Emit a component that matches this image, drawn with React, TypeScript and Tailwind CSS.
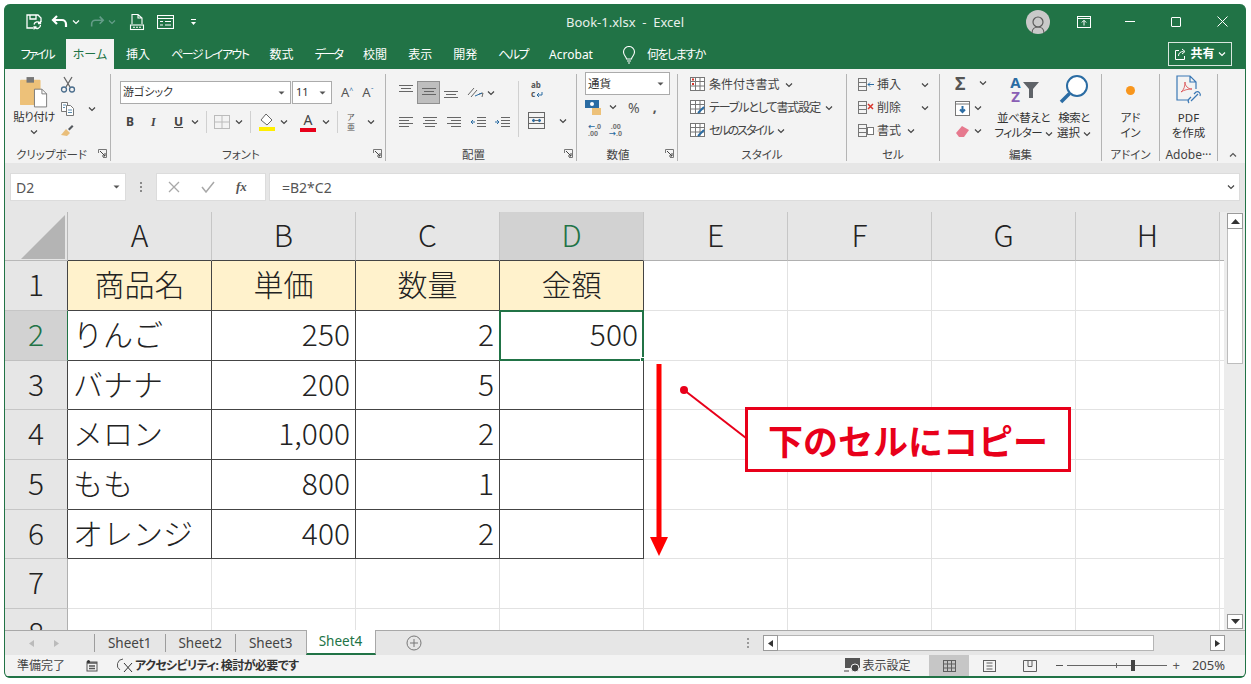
import type { ReactNode } from "react";

const grayIcon = "#5f5f5f";

function Chev({ color = "#444", className = "" }: { color?: string; className?: string }) {
  return (
    <svg width="8" height="6" viewBox="0 0 8 6" className={className}>
      <path d="M1 1.500l3 3 3-3" fill="none" stroke={color} strokeWidth="1.200" />
    </svg>
  );
}

function Drop({ color = "#555" }: { color?: string }) {
  return (
    <svg width="7" height="4" viewBox="0 0 7 4">
      <path d="M0.500 0.500h6L3.500 3.500z" fill={color} />
    </svg>
  );
}

function Launcher() {
  return (
    <svg width="9" height="9" viewBox="0 0 9 9" className="absolute right-[3px] bottom-[3px]">
      <path d="M.5 4V.5H8.500V8.500H5" fill="none" stroke="#777" />
      <path d="M2 2l5 5M7 4v3H4" fill="none" stroke="#444" />
    </svg>
  );
}

function Group({ w, label, launcher, children }: { w: string; label: ReactNode; launcher?: boolean; children: ReactNode }) {
  return (
    <div className={`${w} relative flex h-[87px] shrink-0 flex-col border-r border-[#b4b4b4]`}>
      <div className="min-h-0 flex-1">{children}</div>
      <div className="h-[14px] text-center text-[11.500px] leading-[15px] text-[#444]">{label}</div>
      {launcher && <Launcher />}
    </div>
  );
}

function AlignLines({ lines, className = "" }: { lines: [number, number][]; className?: string }) {
  return (
    <svg width="16" height="12" viewBox="0 0 16 12" className={className}>
      {lines.map(([a, b], i) => (
        <path key={i} d={`M${a} ${1.5 + i * 3}H${b}`} stroke="#666" strokeWidth="1" />
      ))}
    </svg>
  );
}

function QuickBar() {
  return (
    <div className="flex items-center gap-[8px] pl-[20px] text-white">
      <svg width="18" height="18" viewBox="0 0 18 18" fill="none" stroke="#fff" strokeWidth="1.300">
        <path d="M8 15H2V2h11l3 3v4M5 2v4h6V2" />
        <path d="M15.500 12a3.500 3.500 0 0 1-6.200 2.200M9 11.500a3.500 3.500 0 0 1 6-1.500M15.500 8v2.500h-2.500M9 16.500v-2.500h2.500" />
      </svg>
      <div className="flex items-center gap-[3px]">
        <svg width="18" height="14" viewBox="0 0 18 14" fill="none" stroke="#fff" strokeWidth="2.200">
          <path d="M6 1L2 5l4 4M2 5h9a4 4 0 0 1 4 4v3" />
        </svg>
        <Chev color="#fff" />
      </div>
      <div className="ml-[1px] flex items-center gap-[3px] opacity-40">
        <svg width="16" height="14" viewBox="0 0 18 14" fill="none" stroke="#cde" strokeWidth="1.800">
          <path d="M12 1l4 4-4 4M16 5H7a4 4 0 0 0-4 4v3" />
        </svg>
        <Chev color="#cde" />
      </div>
      <svg width="16" height="18" viewBox="0 0 16 18" fill="none" stroke="#fff" strokeWidth="1.100" className="ml-[5px]">
        <path d="M3 11V1.500h6L13 5v6M9 1.500V5h4" />
        <rect x="1.500" y="12" width="13" height="4.500" />
        <path d="M4 14.200h2M7 14.200h2M10 14.200h2" />
      </svg>
      <svg width="17" height="14" viewBox="0 0 17 14" fill="none" stroke="#fff" strokeWidth="1.100" className="ml-[4px]">
        <rect x=".5" y=".5" width="16" height="13" />
        <path d="M.5 3.500h16M3 6.500h3M8 6.500h6M3 10h3M8 10h6" />
      </svg>
      <svg width="7" height="8" viewBox="0 0 7 8" className="ml-[8px]">
        <path d="M1 1.500h5" stroke="#fff" />
        <path d="M1 4h5L3.500 7z" fill="#fff" />
      </svg>
    </div>
  );
}

function WindowButtons() {
  return (
    <div className="flex items-center justify-end">
      <div className="flex h-[24px] w-[24px] items-end justify-center rounded-full bg-[#c9c9c9]">
        <svg width="18" height="20" viewBox="0 0 18 20" fill="none" stroke="#5a5a5a" strokeWidth="1.200">
          <circle cx="9" cy="8" r="5" />
          <path d="M3 19c0-4 3-6 6-6s6 2 6 6" />
        </svg>
      </div>
      <svg width="14" height="12" viewBox="0 0 14 12" fill="none" stroke="#fff" className="ml-[27px]">
        <rect x=".5" y=".5" width="13" height="11" />
        <path d="M.5 2.500h13M7 9.500V4.500M4.800 6.500L7 4.300l2.200 2.200" />
      </svg>
      <div className="ml-[34px] h-px w-[10px] bg-white" />
      <div className="ml-[36px] h-[10px] w-[10px] rounded-[1px] border border-white" />
      <svg width="11" height="11" viewBox="0 0 11 11" stroke="#fff" className="mr-[17px] ml-[36px]">
        <path d="M.5.5l10 10M10.500.5l-10 10" />
      </svg>
    </div>
  );
}

function MenuTabs() {
  const tabs = [
    { t: "挿入", c: "" },
    { t: "ページ レイアウト", c: "tracking-[-1.500px]" },
    { t: "数式", c: "" },
    { t: "データ", c: "tracking-[-2px]" },
    { t: "校閲", c: "" },
    { t: "表示", c: "" },
    { t: "開発", c: "" },
    { t: "ヘルプ", c: "tracking-[-1.500px]" },
    { t: "Acrobat", c: "" },
  ];
  return (
    <div className="flex h-[30px] items-end text-[12px] text-white">
      <div className="flex h-[30px] w-[61px] items-center justify-center pt-[2px] pl-[3px] tracking-[-2.200px]">ファイル</div>
      <div className="flex h-[30px] w-[48px] items-center justify-center bg-[#f3f3f3] pt-[2px] text-[#217346]">ホーム</div>
      <div className="ml-[12px] flex h-[30px] items-center gap-[21px] pt-[2px]">
        {tabs.map(({ t, c }) => (
          <span key={t} className={c}>
            {t}
          </span>
        ))}
      </div>
      <div className="ml-[29px] flex h-[30px] items-center gap-[11px] pt-[2px]">
        <svg width="14" height="18" viewBox="0 0 14 18" fill="none" stroke="#fff" strokeWidth="1.100">
          <path d="M4.500 13c0-2-3-3.500-3-7a5.500 5.500 0 0 1 11 0c0 3.500-3 5-3 7zM5 15h4M6 17h2" />
        </svg>
        <span className="tracking-[-1.500px]">何をしますか</span>
      </div>
      <div className="mr-[13px] mb-[3px] ml-auto flex h-[24px] w-[64px] items-center justify-center gap-[3px] border border-[#d9e6de]">
        <svg width="13" height="13" viewBox="0 0 13 13" fill="none" stroke="#fff">
          <path d="M5 2.500H1.500v9h9V8M4.500 8c0-3 2-4.500 5-4.500M8 1l3 2.500L8 6" />
        </svg>
        <span className="font-bold">共有</span>
        <Chev color="#fff" />
      </div>
    </div>
  );
}

function ClipboardGroup() {
  return (
    <div className="flex pt-[2px]">
      <div className="flex w-[52px] flex-col items-center pl-[6px]">
        <svg width="28" height="32" viewBox="0 0 30 34">
          <rect x="0" y="4" width="22" height="27" rx="1" fill="#edc179" />
          <rect x="7" y="1" width="8" height="6" fill="#777" />
          <path d="M15.500 14h8l5 5v14h-13z" fill="#fff" stroke="#777" />
          <path d="M23.500 14v5h5" fill="none" stroke="#777" />
        </svg>
        <span className="mt-[1px] text-[11.500px] leading-[15px] tracking-[-0.600px] whitespace-nowrap">貼り付け</span>
        <Chev className="mt-[5px]" />
      </div>
      <div className="ml-[3px] flex flex-col gap-[8px]">
        <svg width="16" height="17" viewBox="0 0 16 17" fill="none" stroke="#4a6d8c" strokeWidth="1.300">
          <path d="M4 1l6 10M12 1L6 11" stroke="#666" />
          <circle cx="4" cy="13.500" r="2.500" />
          <circle cx="12" cy="13.500" r="2.500" />
        </svg>
        <div className="flex items-center">
          <svg width="15" height="15" viewBox="0 0 15 15" fill="#fff" stroke="#777">
            <path d="M1.500 1.500h6v9h-6z" />
            <path d="M6.500 4.500h4l3 3v7h-7z" />
            <path d="M3 4h3M3 6.500h2M8 9h4M8 11.500h4" stroke="#5b8db0" />
          </svg>
          <Chev className="ml-[13px]" />
        </div>
        <svg width="14" height="13" viewBox="0 0 14 13">
          <path d="M1 11l5-6 4 4-3 3z" fill="#e9be7a" />
          <path d="M8 5l4-4 1.500 1.500-4 4z" fill="#55595e" />
        </svg>
      </div>
    </div>
  );
}

function FontGroup() {
  return (
    <div className="pt-[7px] pl-[9px]">
      <div className="flex items-center">
        <div className="flex h-[23px] w-[171px] items-center justify-between border border-[#ababab] bg-white pr-[5px] pl-[2px] text-[11px]">
          <span>游ゴシック</span>
          <Drop />
        </div>
        <div className="ml-[1px] flex h-[23px] w-[40px] items-center justify-between border border-[#ababab] bg-white pr-[5px] pl-[3px] text-[11px]">
          <span>11</span>
          <Drop />
        </div>
        <span className="ml-[9px] text-[13px] text-[#555]">A<sup className="text-[7px] text-[#2b6ca3]">^</sup></span>
        <span className="ml-[9px] text-[13px] text-[#555]">A<sup className="text-[7px] text-[#2b6ca3]">ˇ</sup></span>
      </div>
      <div className="mt-[6px] flex h-[24px] items-center pl-[6px] text-[12px] text-[#444]">
        <b className="w-[25px]">B</b>
        <i className="w-[23px] font-['Liberation_Serif',serif] font-bold">I</i>
        <u className="w-[17px] font-bold">U</u>
        <Chev />
        <div className="mx-[7px] h-[22px] w-px bg-[#d0d0d0]" />
        <svg width="16" height="14" viewBox="0 0 16 14" fill="none" stroke="#bbb" className="mr-[5px]">
          <rect x=".5" y=".5" width="15" height="13" />
          <path d="M8 .5v13M.5 7h15" />
        </svg>
        <Chev />
        <div className="mx-[7px] h-[22px] w-px bg-[#d0d0d0]" />
        <svg width="18" height="20" viewBox="0 0 18 20" className="mr-[4px]">
          <path d="M8 2l6 6-5 5-6-5z" fill="#fff" stroke="#666" />
          <rect x="1" y="15" width="16" height="4" fill="#ffee00" />
        </svg>
        <Chev />
        <div className="relative mr-[6px] ml-[12px] h-[20px] w-[16px] text-center text-[14px] leading-[16px] text-[#444]">
          A<div className="absolute right-0 bottom-0 left-0 h-[4px] bg-[#e8001a]" />
        </div>
        <Chev />
        <div className="mx-[7px] h-[22px] w-px bg-[#d0d0d0]" />
        <svg width="12" height="20" viewBox="0 0 12 20" fill="#555" fontSize="8" className="overflow-visible">
          <text x="2" y="8">ア</text>
          <text x="2" y="18">亜</text>
        </svg>
        <Chev className="ml-[10px]" />
      </div>
    </div>
  );
}

function AlignGroup() {
  return (
    <div className="flex pt-[7px] pl-[12px]">
      <div className="flex flex-col gap-[12px]">
        <div className="flex h-[23px] items-center gap-[3px]">
          <AlignLines lines={[[1, 15], [3, 13], [1, 15]]} className="-mt-[6px]" />
          <div className="flex h-[23px] w-[23px] items-center justify-center border border-[#8f8f8f] bg-[#bebebe]">
            <AlignLines lines={[[1, 15], [3, 13], [1, 15]]} />
          </div>
          <AlignLines lines={[[1, 15], [3, 13], [1, 15]]} className="mt-[6px]" />
          <svg width="18" height="14" viewBox="0 0 18 14" fill="none" stroke="#666" className="ml-[4px]">
            <path d="M2 9l6-7M5 11l6-7M13 8l4-1-1 4" />
            <path d="M9 10l7-3" stroke="#2b6ca3" />
          </svg>
          <Chev />
        </div>
        <div className="flex items-center gap-[8px]">
          <AlignLines lines={[[1, 15], [1, 11], [1, 15], [1, 11]]} />
          <AlignLines lines={[[1, 15], [3, 13], [1, 15], [3, 13]]} />
          <AlignLines lines={[[1, 15], [5, 15], [1, 15], [5, 15]]} />
          <svg width="16" height="12" viewBox="0 0 16 12" fill="none" stroke="#666">
            <path d="M7 1.500h9M7 4.500h9M7 7.500h9M7 10.500h9" />
            <path d="M5 6H1M3 4L1 6l2 2" stroke="#2b6ca3" />
          </svg>
          <svg width="16" height="12" viewBox="0 0 16 12" fill="none" stroke="#666">
            <path d="M7 1.500h9M7 4.500h9M7 7.500h9M7 10.500h9" />
            <path d="M1 6h4M3 4l2 2-2 2" stroke="#2b6ca3" />
          </svg>
        </div>
      </div>
      <div className="mx-[8px] h-[56px] w-px bg-[#d0d0d0]" />
      <div className="-mt-[1px] flex flex-col gap-[12px] pl-[1px]">
        <svg width="16" height="20" viewBox="0 0 16 20" fill="#555" fontSize="8" fontWeight="700" className="overflow-visible">
          <text x="3" y="8">ab</text>
          <text x="3" y="17">c</text>
          <path d="M14 12v3H9M11 13l-2 2 2 2" fill="none" stroke="#2b6ca3" />
        </svg>
        <div className="flex items-center gap-[14px]">
          <svg width="17" height="17" viewBox="0 0 17 17" fill="none" stroke="#666">
            <rect x=".5" y=".5" width="16" height="16" />
            <path d="M.5 5.500h16M.5 11.500h16M4 8.500h9" />
            <path d="M4 8.500l2-1.500v3zM13 8.500l-2-1.500v3z" fill="#2b6ca3" stroke="#2b6ca3" />
          </svg>
          <Chev />
        </div>
      </div>
    </div>
  );
}

function NumberGroup() {
  return (
    <div className="-mt-[2px] pl-[8px]">
      <div className="flex h-[23px] w-[85px] items-center justify-between border border-[#ababab] bg-white pr-[5px] pl-[2px] text-[11.500px]">
        <span>通貨</span>
        <Drop />
      </div>
      <div className="mt-[1px] flex h-[22px] items-center">
        <svg width="17" height="17" viewBox="0 0 17 17">
          <rect x="0" y="1" width="14" height="8" fill="#2b6ca3" />
          <circle cx="7" cy="5" r="2" fill="#fff" />
          <rect x="7" y="9" width="9" height="7" fill="#edc179" />
        </svg>
        <Chev className="ml-[7px]" />
        <span className="ml-[11px] text-[14px] text-[#555]">%</span>
        <span className="ml-[13px] text-[14px] leading-[10px] font-bold text-[#555]">,</span>
      </div>
      <div className="mt-[5px] flex gap-[8px] pl-[3px] text-[7px] leading-[7px] font-bold text-[#777]">
        <span>
          <span className="text-[#2b6ca3]">←</span>.0
          <br />
          .00
        </span>
        <span>
          &nbsp;.00
          <br />
          <span className="text-[#2b6ca3]">→</span>.0
        </span>
      </div>
    </div>
  );
}

function StyleRow({ accent, text, track }: { accent: ReactNode; text: string; track: string }) {
  return (
    <div className="flex h-[23px] items-center gap-[3px] text-[12px] text-[#444]">
      <svg width="16" height="15" viewBox="0 0 16 15" fill="none" stroke="#777">
        <rect x=".5" y=".5" width="14" height="13" fill="#fff" />
        <path d="M.5 4.500h14M.5 9h14M5.500.5v13M10 .5v13" />
        {accent}
      </svg>
      <span className={`${track} whitespace-nowrap`}>{text}</span>
      <Chev className="ml-[2px]" />
    </div>
  );
}

function CellRow({ text, accent, w }: { text: string; accent: ReactNode; w: string }) {
  return (
    <div className="flex h-[23px] items-center text-[12px] text-[#444]">
      <svg width="16" height="14" viewBox="0 0 16 14" fill="none" stroke="#777">
        <rect x=".5" y=".5" width="8" height="4" />
        <rect x=".5" y="4.500" width="8" height="4" />
        <rect x=".5" y="8.500" width="8" height="4" />
        {accent}
      </svg>
      <span className={`${w} ml-[3px]`}>{text}</span>
      <Chev />
    </div>
  );
}

function EditGroup() {
  return (
    <div className="flex pl-[15px]">
      <div className="flex w-[38px] flex-col gap-[7px]">
        <div className="flex h-[18px] items-center">
          <span className="w-[24px] text-[18px] leading-[18px] font-bold text-[#555]">Σ</span>
          <Chev />
        </div>
        <div className="flex h-[18px] items-center">
          <svg width="15" height="15" viewBox="0 0 15 15" className="mr-[4px]">
            <rect x=".5" y=".5" width="14" height="14" fill="#fff" stroke="#777" />
            <path d="M.5 3h14" stroke="#777" />
            <path d="M7.500 5v6M5 8.500l2.500 2.500L10 8.500" fill="none" stroke="#2b6ca3" strokeWidth="2" />
          </svg>
          <Chev />
        </div>
        <div className="flex h-[14px] items-center">
          <svg width="15" height="13" viewBox="0 0 15 13" className="mr-[4px]">
            <path d="M1 8l6-7 7 4-5 7H4z" fill="#e6798e" />
          </svg>
          <Chev />
        </div>
      </div>
      <div className="flex w-[61px] flex-col items-center">
        <div className="flex h-[30px] items-center">
          <svg width="15" height="28" viewBox="0 0 15 28" fontSize="15" fontWeight="700" textAnchor="middle" className="overflow-visible">
            <text x="7.500" y="13" fill="#2b6ca3">A</text>
            <text x="7.500" y="27" fill="#8a5fb5">Z</text>
          </svg>
          <svg width="16" height="17" viewBox="0 0 16 17">
            <path d="M0 1h16l-6 7v9H6V8z" fill="#5f6368" />
          </svg>
        </div>
        <span className="mt-[6px] text-[11.500px] leading-[15px] tracking-[-0.500px] whitespace-nowrap">並べ替えと</span>
        <span className="text-[11.500px] leading-[15px] tracking-[-0.500px] whitespace-nowrap">
          フィルター <Chev className="inline" />
        </span>
      </div>
      <div className="flex w-[40px] flex-col items-center">
        <svg width="30" height="30" viewBox="0 0 30 30" fill="none">
          <circle cx="18" cy="12" r="10" stroke="#2b6ca3" strokeWidth="2" fill="#fff" />
          <path d="M10.500 19.500L2 28" stroke="#2b6ca3" strokeWidth="3.500" />
        </svg>
        <span className="mt-[6px] text-[11.500px] leading-[15px] tracking-[-0.500px] whitespace-nowrap">検索と</span>
        <span className="text-[11.500px] leading-[15px] whitespace-nowrap">
          選択 <Chev className="inline" />
        </span>
      </div>
    </div>
  );
}

function Ribbon() {
  return (
    <div className="flex h-[94px] items-start justify-start bg-[#f3f3f3] pt-[5px] text-[#333]">
      <Group w="w-[106px]" label={<span className="-ml-[12px] inline-block">クリップボード</span>} launcher>
        <ClipboardGroup />
      </Group>
      <Group w="w-[275px]" label={<span className="-ml-[14px] inline-block">フォント</span>} launcher>
        <FontGroup />
      </Group>
      <Group w="w-[191px]" label={<span className="-ml-[15px] inline-block">配置</span>} launcher>
        <AlignGroup />
      </Group>
      <Group w="w-[101px]" label={<span className="-ml-[18px] inline-block">数値</span>} launcher>
        <NumberGroup />
      </Group>
      <Group w="w-[169px]" label="スタイル">
        <div className="-mt-[1px] pl-[12px]">
          <StyleRow track="" text="条件付き書式" accent={<path d="M2 2.500h2M2 7h2" stroke="#d8352a" strokeWidth="2" />} />
          <StyleRow track="tracking-[-1.100px]" text="テーブルとして書式設定" accent={<path d="M8 13l6-6" stroke="#2b6ca3" strokeWidth="2" />} />
          <StyleRow track="tracking-[-2px]" text="セルのスタイル" accent={<path d="M8 13l6-6" stroke="#2b6ca3" strokeWidth="2" />} />
        </div>
      </Group>
      <Group w="w-[93px]" label="セル">
        <div className="-mt-[1px] pl-[11px]">
          <CellRow text="挿入" accent={<path d="M10 6.500h6M12 4.500l-2 2 2 2" stroke="#2b6ca3" />} w="w-[44px]" />
          <CellRow text="削除" accent={<path d="M10 3l5 5M15 3l-5 5" stroke="#d8352a" strokeWidth="1.500" />} w="w-[44px]" />
          <CellRow text="書式" accent={<rect x="9.500" y="3.500" width="6" height="7" fill="#fff" />} w="w-[30px]" />
        </div>
      </Group>
      <Group w="w-[162px]" label="編集">
        <EditGroup />
      </Group>
      <Group w="w-[58px]" label="アドイン">
        <div className="flex flex-col items-center pt-[12px]">
          <div className="h-[9px] w-[9px] rounded-full bg-[#f8961d]" />
          <span className="mt-[15px] text-center text-[11.500px] leading-[15px]">
            アド
            <br />
            イン
          </span>
        </div>
      </Group>
      <Group w="w-[58px]" label={<span className="text-[12px] whitespace-nowrap">Adobe···</span>}>
        <div className="flex flex-col items-center pt-[1px]">
          <svg width="27" height="31" viewBox="0 0 27 31" fill="none" stroke="#3a78b5" strokeWidth="1.200">
            <path d="M13 25H2V1h13l6 6v7M15 1v6h6" />
            <path d="M6 17c3-2 4-6 4-10 0 4 3 7 7 7-4 0-8 1-11 3z" stroke="#d8464a" strokeWidth=".8" />
            <path d="M16 26l7-7m-9 9a3 3 0 0 1 0-4l2-2m9-1a3 3 0 0 0-4-4l-2 2" />
          </svg>
          <span className="mt-[4px] text-center text-[11.500px] leading-[15px]">
            PDF
            <br />
            を作成
          </span>
        </div>
      </Group>
      <div className="relative h-[86px] flex-1">
        <Chev className="absolute right-[8px] bottom-[2px] rotate-180" color="#555" />
      </div>
    </div>
  );
}

function FormulaBar() {
  return (
    <div className="flex h-[49px] gap-0 bg-[#e6e6e6] pt-[10px] pl-[5px] text-[14px] text-[#555]">
      <div className="flex h-[28px] w-[116px] items-center justify-between border border-[#dcdcdc] bg-white pr-[5px] pl-[5px]">
        <span className="pt-[1px]">D2</span>
        <Drop />
      </div>
      <div className="flex w-[30px] items-center justify-center pb-[10px] text-[#999]">
        <svg width="3" height="11" viewBox="0 0 3 11" fill="#8a8a8a">
          <rect y="0" width="2" height="2" />
          <rect y="4" width="2" height="2" />
          <rect y="8" width="2" height="2" />
        </svg>
      </div>
      <div className="flex h-[28px] w-[110px] items-center gap-[21px] border border-[#dcdcdc] bg-white pl-[11px]">
        <svg width="12" height="12" viewBox="0 0 12 12" stroke="#a8a8a8" strokeWidth="1.300">
          <path d="M1 1l10 10M11 1L1 11" />
        </svg>
        <svg width="14" height="12" viewBox="0 0 14 12" fill="none" stroke="#a8a8a8" strokeWidth="1.500">
          <path d="M1 6l4 5 8-10" />
        </svg>
        <i className="font-['Liberation_Serif',serif] text-[13px] font-bold text-[#555]">fx</i>
      </div>
      <div className="ml-[3px] flex h-[28px] w-[971px] items-center justify-between border border-[#dcdcdc] bg-white pr-[4px] pl-[12px]">
        <span>=B2*C2</span>
        <Chev />
      </div>
    </div>
  );
}

const columns = ["A", "B", "C", "D", "E", "F", "G", "H"];
const rowHeights = ["h-[50px]", "h-[50px]", "h-[49px]", "h-[50px]", "h-[50px]", "h-[49px]", "h-[50px]", "h-[50px]"];
const table: string[][] = [
  ["商品名", "単価", "数量", "金額"],
  ["りんご", "250", "2", "500"],
  ["バナナ", "200", "5", ""],
  ["メロン", "1,000", "2", ""],
  ["もも", "800", "1", ""],
  ["オレンジ", "400", "2", ""],
];

function Sheet() {
  return (
    <div className="relative h-[369px] overflow-hidden bg-white">
      <div className="grid grid-cols-[63px_repeat(8,144px)_4px] font-['Noto_Sans_CJK_JP',sans-serif] text-[30px] leading-none font-light text-[#222] [font-feature-settings:normal]">
        {rowHeights.map((h, r) => {
          const row = table[r];
          const active = r === 1;
          return (
            <div key={r} className="contents">
              <div
                className={`${h} flex items-center justify-center border-b pb-[5px] ${
                  active ? "border-[#c0c0c0] bg-[#d2d2d2] text-[#217346]" : "border-[#c6c6c6] bg-[#e6e6e6]"
                } border-r ${active ? "border-r-[#217346]" : row ? "border-r-[#444]" : "border-r-[#b0b0b0]"}`}
              >
                {r + 1}
              </div>
              {columns.map((_, c) => {
                const v = row && c < 4 ? row[c] : undefined;
                const inTable = row && c < 4;
                const head = r === 0 && c < 4;
                const numeric = r > 0 && c > 0;
                return (
                  <div
                    key={c}
                    className={`${h} relative flex items-center border-r border-b px-[5px] pb-[5px] ${
                      inTable ? "border-[#444]" : "border-[#e2e2e2]"
                    } ${head ? "justify-center bg-[#fff2cc]" : numeric ? "justify-end" : "justify-start"}`}
                  >
                    {v}
                    {r === 1 && c === 3 && (
                      <div className="absolute -top-px -right-px -bottom-px -left-px border-2 border-[#217346]">
                        <div className="absolute -right-[3px] -bottom-[3px] h-[5px] w-[5px] border border-white bg-[#217346]" />
                      </div>
                    )}
                  </div>
                );
              })}
              <div className={`${h} border-b border-[#e2e2e2]`} />
            </div>
          );
        })}
      </div>
      <svg width="420" height="220" viewBox="0 0 420 220" className="absolute top-[103px] left-[640px]" fill="none">
        <path d="M14 0V176" stroke="#ff0000" strokeWidth="5" />
        <path d="M5 173H23L14 192Z" fill="#ff0000" />
        <circle cx="39" cy="26" r="4" fill="#e8001a" />
        <path d="M39 26L101 74" stroke="#e8001a" strokeWidth="2" />
      </svg>
      <div className="absolute top-[146px] left-[740px] flex h-[65px] w-[326px] items-center justify-center border-[3px] border-[#e8001a] bg-white font-['Noto_Sans_CJK_JP',sans-serif] text-[35px] leading-none font-bold text-[#e8001a] [font-feature-settings:normal]">
        下のセルにコピー
      </div>
    </div>
  );
}

function ColumnHeader() {
  return (
    <div className="grid h-[49px] grid-cols-[63px_repeat(8,144px)_4px] bg-[#e6e6e6] font-['Noto_Sans_CJK_JP',sans-serif] text-[30px] leading-none font-light text-[#222] [font-feature-settings:normal]">
      <div className="relative border-r border-b border-[#b8b8b8]">
        <svg width="44" height="44" viewBox="0 0 44 44" className="absolute right-[2px] bottom-[1px]">
          <path d="M44 0V44H0Z" fill="#b4b4b4" />
        </svg>
      </div>
      {columns.map((c, i) => (
        <div
          key={c}
          className={`flex items-center justify-center border-r border-b pb-[5px] ${
            i === 3 ? "border-r-[#c6c6c6] bg-[#d2d2d2] text-[#217346]" : "border-r-[#c6c6c6]"
          } ${i < 4 ? "border-b-[#444]" : "border-b-[#b0b0b0]"}`}
        >
          {c}
        </div>
      ))}
      <div className="border-b border-[#b0b0b0] bg-[#ececec]" />
    </div>
  );
}

function VerticalScroll() {
  return (
    <div className="flex w-[21px] flex-col items-end bg-[#ececec] pt-[1px] pr-[2px]">
      <div className="flex h-[16px] w-[16px] items-center justify-center border border-[#9a9a9a] bg-white">
        <svg width="9" height="5" viewBox="0 0 9 5">
          <path d="M0 5h9L4.500 0z" fill="#333" />
        </svg>
      </div>
      <div className="h-[135px] w-[16px] border-x border-b border-[#bdbdbd] bg-white" />
      <div className="mt-auto mb-[1px] flex h-[15px] w-[16px] items-center justify-center border border-[#9a9a9a] bg-white">
        <svg width="9" height="5" viewBox="0 0 9 5">
          <path d="M0 0h9L4.500 5z" fill="#333" />
        </svg>
      </div>
    </div>
  );
}

function SheetTabs() {
  return (
    <div className="flex h-[25px] items-stretch border-t border-[#a8a8a8] bg-[#e6e6e6] text-[13.500px] text-[#444]">
      <div className="flex w-[89px] items-center gap-[20px] pl-[24px] text-[#b8b8b8]">
        <svg width="5" height="7" viewBox="0 0 5 7">
          <path d="M5 0v7L0 3.500z" fill="#bbb" />
        </svg>
        <svg width="5" height="7" viewBox="0 0 5 7">
          <path d="M0 0v7l5-3.500z" fill="#bbb" />
        </svg>
      </div>
      {["Sheet1", "Sheet2", "Sheet3"].map((s) => (
        <div key={s} className="my-[3px] flex w-[70.500px] items-center justify-center border-l border-[#9d9d9d]">
          {s}
        </div>
      ))}
      <div className="-mt-px flex w-[70px] items-center justify-center border-x border-b-2 border-x-[#a8a8a8] border-b-[#217346] bg-white text-[#217346]">
        Sheet4
      </div>
      <div className="ml-[30px] flex items-center">
        <svg width="16" height="16" viewBox="0 0 16 16" fill="none" stroke="#777">
          <circle cx="8" cy="8" r="7" />
          <path d="M8 4v8M4 8h8" />
        </svg>
      </div>
      <div className="ml-auto flex items-center">
        <svg width="3" height="11" viewBox="0 0 3 11" fill="#999" className="mr-[13px]">
          <rect y="0" width="2" height="2" />
          <rect y="4" width="2" height="2" />
          <rect y="8" width="2" height="2" />
        </svg>
        <div className="flex h-[16px] w-[15px] items-center justify-center border border-[#9a9a9a] bg-white">
          <svg width="5" height="7" viewBox="0 0 5 7">
            <path d="M5 0v7L0 3.500z" fill="#333" />
          </svg>
        </div>
        <div className="h-[16px] w-[376px] border-y border-r border-[#b5b5b5] bg-white" />
        <div className="w-[56px]" />
        <div className="mr-[20px] flex h-[16px] w-[15px] items-center justify-center border border-[#9a9a9a] bg-white">
          <svg width="5" height="7" viewBox="0 0 5 7">
            <path d="M0 0v7l5-3.500z" fill="#333" />
          </svg>
        </div>
      </div>
    </div>
  );
}

function StatusBar() {
  return (
    <div className="flex h-[21px] items-center bg-[#f3f3f3] text-[12px] text-[#444]">
      <span className="ml-[12px]">準備完了</span>
      <svg width="12" height="12" viewBox="0 0 12 12" className="ml-[21px]">
        <rect x="1" y="2" width="10" height="9" fill="none" stroke="#555" />
        <path d="M1 3h10M3 6h6M3 8.500h6" stroke="#555" strokeWidth="1.500" />
        <circle cx="2.500" cy="1.500" r="1.500" fill="#333" />
      </svg>
      <svg width="17" height="15" viewBox="0 0 17 15" fill="none" stroke="#555" className="ml-[19px]">
        <path d="M6 1a6 6 0 0 0-3 11" />
        <path d="M7 5l8 9M15 5l-8 9" stroke="#333" />
      </svg>
      <b className="ml-[1px] text-[12px] tracking-[-0.600px] text-[#333]">アクセシビリティ: 検討が必要です</b>
      <div className="ml-auto flex h-full items-center">
        <svg width="17" height="15" viewBox="0 0 17 15" className="mr-[1px]">
          <rect x="1" y="0" width="15" height="10" fill="#555" />
          <circle cx="11" cy="10" r="4" fill="#444" stroke="#f3f3f3" />
          <path d="M0 13h5" stroke="#444" />
        </svg>
        <span className="text-[12px]">表示設定</span>
        <div className="ml-[19px] flex h-full w-[40px] items-center justify-center bg-[#c6c6c6]">
          <svg width="13" height="12" viewBox="0 0 13 12" fill="none" stroke={grayIcon}>
            <rect x=".5" y=".5" width="12" height="11" />
            <path d="M4.500.5v11M8.500.5v11M.5 4h12M.5 8h12" />
          </svg>
        </div>
        <svg width="13" height="12" viewBox="0 0 13 12" fill="none" stroke={grayIcon} className="ml-[14px]">
          <rect x=".5" y=".5" width="12" height="11" />
          <path d="M3.500 3h6M3.500 6h6M3.500 9h6" />
        </svg>
        <svg width="14" height="12" viewBox="0 0 14 12" fill="none" stroke={grayIcon} className="ml-[27px]">
          <path d="M.5 11.500V.5h13v11zM5 .5v6h4v-6" />
        </svg>
        <span className="ml-[19px] h-px w-[7px] bg-[#555]" />
        <div className="relative ml-[4px] h-px w-[100px] bg-[#666]">
          <div className="absolute top-[-2px] left-[49px] h-[5px] w-px bg-[#666]" />
          <div className="absolute top-[-5px] left-[64px] h-[11px] w-[4px] bg-[#444]" />
        </div>
        <span className="ml-[5px] text-[13px] text-[#555]">+</span>
        <span className="mr-[20px] ml-[12px] text-[13px]">205%</span>
      </div>
    </div>
  );
}

export default function App() {
  return (
    <div className="h-[684px] w-[1251px] bg-white pt-[4px] pl-[4px] font-['Noto_Sans','Noto_Sans_CJK_JP',sans-serif] [font-feature-settings:'palt']">
      <div className="h-[674px] w-[1242px] overflow-hidden rounded-t-[6px] rounded-b-[6px] border-x border-b border-[#217346] bg-[#217346]">
        <div className="grid h-[35px] grid-cols-[1fr_auto_1fr] items-center">
          <QuickBar />
          <div className="pt-[2px] text-[13px] text-[#e8f0eb]">Book-1.xlsx&nbsp; - &nbsp;Excel</div>
          <WindowButtons />
        </div>
        <MenuTabs />
        <Ribbon />
        <FormulaBar />
        <div className="flex">
          <div className="w-[1219px] shrink-0">
            <ColumnHeader />
            <Sheet />
          </div>
          <VerticalScroll />
        </div>
        <SheetTabs />
        <StatusBar />
      </div>
    </div>
  );
}
